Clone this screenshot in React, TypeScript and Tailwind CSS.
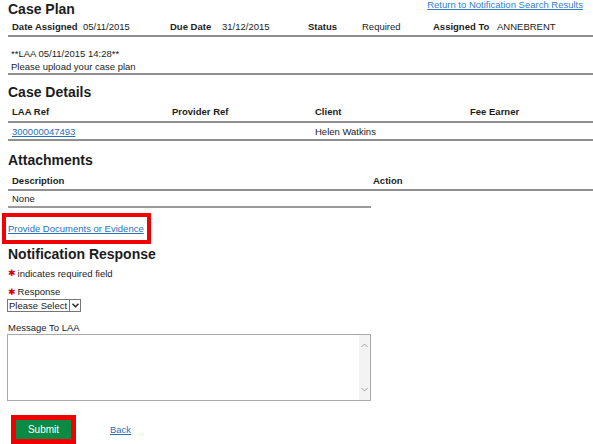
import React from 'react'

const font = { fontFamily: '"Liberation Sans", Arial, sans-serif' }

function Star() {
  return <span className="text-[#d40000] text-[9px] leading-none mr-[2px]" style={{ fontFamily: '"DejaVu Sans", sans-serif' }}>✱</span>
}

export default function App() {
  const details = [
    { text: 'Date Assigned', w: 'w-[71px]', bold: true },
    { text: '05/11/2015', w: 'w-[87px]' },
    { text: 'Due Date', w: 'w-[52px]', bold: true },
    { text: '31/12/2015', w: 'w-[86px]' },
    { text: 'Status', w: 'w-[54px]', bold: true },
    { text: 'Required', w: 'w-[71px]' },
    { text: 'Assigned To', w: 'w-[64px]', bold: true },
    { text: 'ANNEBRENT', w: '' },
  ]

  return (
    <div className="w-[593px] h-[444px] overflow-hidden bg-white pl-[8px] text-[9.5px] text-[#1c1c1c]" style={font}>
      {/* Case Plan */}
      <div className="flex justify-between items-start h-[18px]">
        <h1 className="text-[14px] font-bold leading-[18px]">Case Plan</h1>
        <a href="#" className="mr-[10px] leading-[10px] text-[#2f7fcf] underline">Return to Notification Search Results</a>
      </div>
      <div className="flex items-center h-[19px] pt-[2px] pl-[4px] border-b-2 border-[#8f8f8f]">
        {details.map((d) => (
          <span key={d.text} className={`${d.w} ${d.bold ? 'font-bold' : ''} whitespace-nowrap`}>{d.text}</span>
        ))}
      </div>
      <div className="pt-[10px] pl-[3px] leading-[13px] border-b-2 border-[#8f8f8f]">
        <div>**LAA 05/11/2015 14:28**</div>
        <div>Please upload your case plan</div>
      </div>

      {/* Case Details */}
      <h2 className="mt-[8px] text-[14px] font-bold leading-[18px]">Case Details</h2>
      <div className="flex items-center h-[22px] pt-[3px] pl-[4px] font-bold border-b-2 border-[#8f8f8f]">
        <span className="w-[160px]">LAA Ref</span>
        <span className="w-[143px]">Provider Ref</span>
        <span className="w-[155px]">Client</span>
        <span>Fee Earner</span>
      </div>
      <div className="flex items-center h-[18px] pt-[2px] pl-[4px] border-b-2 border-[#8f8f8f]">
        <a href="#" className="w-[160px] text-[#2a6fc0] underline">300000047493</a>
        <span className="w-[143px]"></span>
        <span className="w-[155px]">Helen Watkins</span>
        <span></span>
      </div>

      {/* Attachments */}
      <h2 className="mt-[10px] text-[14px] font-bold leading-[18px]">Attachments</h2>
      <div className="flex items-center h-[22px] pt-[4px] font-bold border-b-2 border-[#8f8f8f]">
        <span className="w-[365px] pl-[4px]">Description</span>
        <span>Action</span>
      </div>
      <div className="flex items-center h-[17px] pt-[2px] w-[363px] pl-[4px] border-b-2 border-[#9a9a9a]">None</div>

      <div className="mt-[5px] -ml-[6px] w-[149px] h-[31px] border-[4px] border-[#f00000] flex items-center pl-[2px]">
        <a href="#" className="text-[#2a6fc0] underline leading-[12px] whitespace-nowrap">Provide Documents or Evidence</a>
      </div>

      {/* Notification Response */}
      <h2 className="mt-[1px] text-[14px] font-bold leading-[18px]">Notification Response</h2>
      <div className="mt-[4px] h-[13px] leading-[13px] flex items-center"><Star /><span>indicates required field</span></div>
      <div className="mt-[6px] h-[12px] leading-[12px] flex items-center"><Star /><span>Response</span></div>
      <div className="mt-[1px] -ml-[1px] w-[74px] h-[13px] border border-[#767676] flex items-stretch bg-white">
        <span className="flex-1 pl-[1px] text-[9.5px] leading-[11px] whitespace-nowrap overflow-hidden">Please Select</span>
        <span className="w-[11px] border-l border-[#767676] flex items-center justify-center">
          <svg width="7" height="5" viewBox="0 0 7 5"><path d="M0.5 0.8 L3.5 3.8 L6.5 0.8" fill="none" stroke="#222" strokeWidth="1.4" /></svg>
        </span>
      </div>
      <div className="mt-[9px] leading-[13px]">Message To LAA</div>
      <div className="-ml-[1px] w-[364px] h-[67px] border border-[#a9a9a9] flex justify-end">
        <div className="w-[11px] bg-[#f3f3f3] flex flex-col items-center justify-between py-[8px]">
          <svg width="7" height="5" viewBox="0 0 7 5"><path d="M0.5 4 L3.5 1 L6.5 4" fill="none" stroke="#a0a0a0" strokeWidth="1" /></svg>
          <svg width="7" height="5" viewBox="0 0 7 5"><path d="M0.5 1 L3.5 4 L6.5 1" fill="none" stroke="#a0a0a0" strokeWidth="1" /></svg>
        </div>
      </div>

      <div className="mt-[14px] ml-[3px] flex items-center">
        <div className="w-[65px] h-[29px] border-[5px] border-[#f00000]">
          <button className="w-full h-full bg-[#0b8a44] text-white text-[10px] leading-none">Submit</button>
        </div>
        <a href="#" className="ml-[34px] mt-[2px] text-[#2a6fc0] underline">Back</a>
      </div>
    </div>
  )
}
